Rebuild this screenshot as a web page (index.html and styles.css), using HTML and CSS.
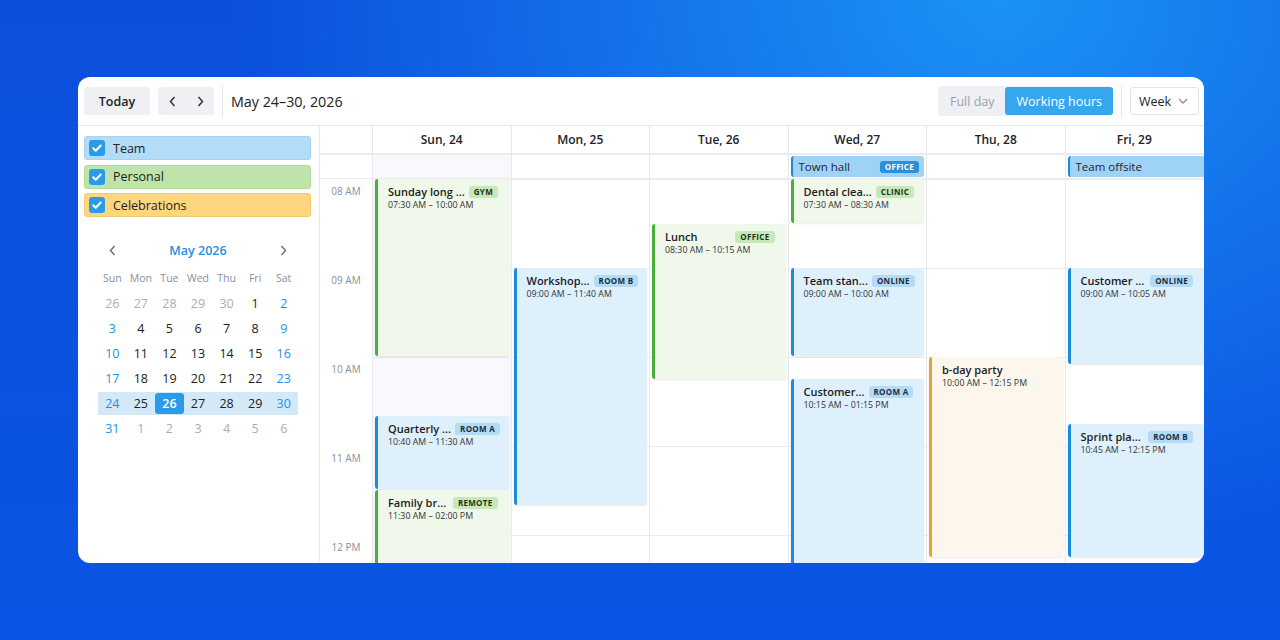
FILE: index.html
```html
<!DOCTYPE html>
<html lang="en">
<head>
  <meta charset="UTF-8">
  <meta name="viewport" content="width=device-width,initial-scale=1.0">
  <title>Week schedule</title>
  <link rel="stylesheet" href="styles.css">
</head>
<body>

<div class="card">
  <div class="toolbar">
    <button class="btn btn-today">Today</button>
    <div class="btn nav">
      <button class="nav-btn"><svg width="7" height="11" viewBox="0 0 7 11"><path d="M5.5 1 1.5 5.5 5.5 10" fill="none" stroke="#333" stroke-width="1.5"/></svg></button>
      <button class="nav-btn"><svg width="7" height="11" viewBox="0 0 7 11"><path d="M1.5 1 5.5 5.5 1.5 10" fill="none" stroke="#333" stroke-width="1.5"/></svg></button>
    </div>
    <div class="divider"></div>
    <div class="range">May 24–30, 2026</div>
    <div class="spacer"></div>
    <div class="switch">
      <button class="switch-item">Full day</button>
      <button class="switch-item active">Working hours</button>
    </div>
    <div class="divider"></div>
    <button class="select">Week <svg width="10" height="6" viewBox="0 0 10 6"><path d="M1 1l4 4 4-4" fill="none" stroke="#8a8f98" stroke-width="1.3"/></svg></button>
  </div>

  <div class="content">
    <aside class="sidebar">
      <ul class="cal-list">
        <li class="cal-item team"><span class="check"><svg width="16" height="16" viewBox="0 0 16 16"><path d="M4.2 8.2l2.5 2.5 5-5.2" fill="none" stroke="#fff" stroke-width="2" stroke-linecap="round" stroke-linejoin="round"/></svg></span>Team</li>
        <li class="cal-item personal"><span class="check"><svg width="16" height="16" viewBox="0 0 16 16"><path d="M4.2 8.2l2.5 2.5 5-5.2" fill="none" stroke="#fff" stroke-width="2" stroke-linecap="round" stroke-linejoin="round"/></svg></span>Personal</li>
        <li class="cal-item celebrations"><span class="check"><svg width="16" height="16" viewBox="0 0 16 16"><path d="M4.2 8.2l2.5 2.5 5-5.2" fill="none" stroke="#fff" stroke-width="2" stroke-linecap="round" stroke-linejoin="round"/></svg></span>Celebrations</li>
      </ul>

      <div class="mini">
        <div class="mini-head">
          <span class="mini-nav"><svg width="7" height="11" viewBox="0 0 7 11"><path d="M5.5 1 1.5 5.5 5.5 10" fill="none" stroke="#666" stroke-width="1.3"/></svg></span>
          <span class="mini-title">May 2026</span>
          <span class="mini-nav"><svg width="7" height="11" viewBox="0 0 7 11"><path d="M1.5 1 5.5 5.5 1.5 10" fill="none" stroke="#666" stroke-width="1.3"/></svg></span>
        </div>
        <div class="mini-row wd"><span>Sun</span><span>Mon</span><span>Tue</span><span>Wed</span><span>Thu</span><span>Fri</span><span>Sat</span></div>
        <div class="mini-row"><span class="out">26</span><span class="out">27</span><span class="out">28</span><span class="out">29</span><span class="out">30</span><span>1</span><span class="we">2</span></div>
        <div class="mini-row"><span class="we">3</span><span>4</span><span>5</span><span>6</span><span>7</span><span>8</span><span class="we">9</span></div>
        <div class="mini-row"><span class="we">10</span><span>11</span><span>12</span><span>13</span><span>14</span><span>15</span><span class="we">16</span></div>
        <div class="mini-row"><span class="we">17</span><span>18</span><span>19</span><span>20</span><span>21</span><span>22</span><span class="we">23</span></div>
        <div class="mini-row sel"><span class="we">24</span><span>25</span><span class="today">26</span><span>27</span><span>28</span><span>29</span><span class="we">30</span></div>
        <div class="mini-row"><span class="we">31</span><span class="out">1</span><span class="out">2</span><span class="out">3</span><span class="out">4</span><span class="out">5</span><span class="out">6</span></div>
      </div>
    </aside>

    <div class="schedule">
      <div class="row head">
        <div class="cell"></div>
        <div class="cell">Sun, 24</div>
        <div class="cell">Mon, 25</div>
        <div class="cell">Tue, 26</div>
        <div class="cell">Wed, 27</div>
        <div class="cell">Thu, 28</div>
        <div class="cell last">Fri, 29</div>
        <div class="cell"></div>
      </div>

      <div class="row allday">
        <div class="cell"></div>
        <div class="cell weekend"></div>
        <div class="cell"></div>
        <div class="cell"></div>
        <div class="cell"><div class="allday-ev"><span>Town hall</span><span class="badge solid">Office</span></div></div>
        <div class="cell"></div>
        <div class="cell"><div class="allday-ev wide"><span>Team offsite</span></div></div>
        <div class="cell weekend"></div>
      </div>

      <div class="row times">
        <div class="gutter">
          <div class="hour">08 AM</div>
          <div class="hour">09 AM</div>
          <div class="hour">10 AM</div>
          <div class="hour">11 AM</div>
          <div class="hour">12 PM</div>
        </div>

        <div class="col weekend">
          <div class="event green" style="top:0;height:177px">
            <div class="ev-head"><span class="ev-title">Sunday long ...</span><span class="badge">Gym</span></div>
            <div class="ev-time">07:30 AM – 10:00 AM</div>
          </div>
          <div class="event blue" style="top:237px;height:73px">
            <div class="ev-head"><span class="ev-title">Quarterly ...</span><span class="badge">Room A</span></div>
            <div class="ev-time">10:40 AM – 11:30 AM</div>
          </div>
          <div class="event green" style="top:311px;height:222px">
            <div class="ev-head"><span class="ev-title">Family br...</span><span class="badge">Remote</span></div>
            <div class="ev-time">11:30 AM – 02:00 PM</div>
          </div>
        </div>

        <div class="col">
          <div class="event blue" style="top:89px;height:237px">
            <div class="ev-head"><span class="ev-title">Workshop...</span><span class="badge">Room B</span></div>
            <div class="ev-time">09:00 AM – 11:40 AM</div>
          </div>
        </div>

        <div class="col">
          <div class="event green" style="top:45px;height:155px">
            <div class="ev-head"><span class="ev-title">Lunch</span><span class="badge">Office</span></div>
            <div class="ev-time">08:30 AM – 10:15 AM</div>
          </div>
        </div>

        <div class="col">
          <div class="event green" style="top:0;height:44px">
            <div class="ev-head"><span class="ev-title">Dental clea...</span><span class="badge">Clinic</span></div>
            <div class="ev-time">07:30 AM – 08:30 AM</div>
          </div>
          <div class="event blue" style="top:89px;height:88px">
            <div class="ev-head"><span class="ev-title">Team stan...</span><span class="badge">Online</span></div>
            <div class="ev-time">09:00 AM – 10:00 AM</div>
          </div>
          <div class="event blue" style="top:200px;height:267px">
            <div class="ev-head"><span class="ev-title">Customer...</span><span class="badge">Room A</span></div>
            <div class="ev-time">10:15 AM – 01:15 PM</div>
          </div>
        </div>

        <div class="col">
          <div class="event orange" style="top:178px;height:200px">
            <div class="ev-head"><span class="ev-title">b-day party</span></div>
            <div class="ev-time">10:00 AM – 12:15 PM</div>
          </div>
        </div>

        <div class="col">
          <div class="event blue" style="top:89px;height:96px">
            <div class="ev-head"><span class="ev-title">Customer ...</span><span class="badge">Online</span></div>
            <div class="ev-time">09:00 AM – 10:05 AM</div>
          </div>
          <div class="event blue" style="top:245px;height:133px">
            <div class="ev-head"><span class="ev-title">Sprint pla...</span><span class="badge">Room B</span></div>
            <div class="ev-time">10:45 AM – 12:15 PM</div>
          </div>
        </div>

        <div class="col weekend"></div>
      </div>
    </div>
  </div>
</div>

</body>
</html>
```

FILE: styles.css
```css
* {
  box-sizing: border-box;
}
body {
  margin: 0;
  width: 1280px;
  height: 640px;
  padding: 77px 0 0 78px;
  overflow: hidden;
  font-family: "Open Sans", "Noto Sans", sans-serif;
  color: #222;
  background:
    radial-gradient(ellipse 75% 110% at 78% 0%, rgba(28,150,248,0.95) 0%, rgba(28,150,248,0) 80%),
    linear-gradient(180deg, #0c4fdb 0%, #0a55e3 100%);
}
button {
  font-family: inherit;
  border: none;
  background: none;
  padding: 0;
  cursor: pointer;
  color: inherit;
}
.card {
  width: 1126px;
  height: 486px;
  background: #fff;
  border-radius: 12px;
  overflow: hidden;
  display: flex;
  flex-direction: column;
}

/* toolbar */
.toolbar {
  flex: none;
  height: 49px;
  display: flex;
  align-items: center;
  padding: 0 5px 0 6px;
  border-bottom: 1px solid #e6e7ea;
}
.btn {
  height: 28px;
  background: #eef0f3;
  border-radius: 3px;
}
.btn-today {
  width: 66px;
  font-size: 12.5px;
  font-weight: 600;
  color: #222;
}
.nav {
  display: flex;
  width: 56px;
  margin-left: 8px;
}
.nav-btn {
  width: 28px;
  height: 28px;
  display: flex;
  align-items: center;
  justify-content: center;
}
.divider {
  width: 1px;
  height: 32px;
  background: #e3e5e8;
  margin: 0 8px;
}
.range {
  font-size: 14.3px;
  color: #222;
}
.spacer {
  flex: 1;
}
.switch {
  display: flex;
  background: #eef0f4;
  border-radius: 4px;
  padding: 1px 0;
}
.switch-item {
  height: 28px;
  font-size: 12.5px;
  color: #9ca1a9;
  padding: 0 11px 0 12px;
  border-radius: 3px;
}
.switch-item.active {
  background: #36a6ef;
  color: #fff;
  padding: 0 11px;
}
.select {
  width: 69px;
  height: 28px;
  border: 1px solid #e1e3e7;
  border-radius: 3px;
  display: flex;
  align-items: center;
  justify-content: space-between;
  padding: 0 10px 0 8px;
  font-size: 12.5px;
  color: #222;
}

/* sidebar */
.content {
  flex: 1;
  display: flex;
  min-height: 0;
}
.sidebar {
  flex: none;
  width: 242px;
  border-right: 1px solid #e6e7ea;
  padding: 10px 8px 0 6px;
}
.cal-list {
  list-style: none;
  margin: 0;
  padding: 0;
  display: flex;
  flex-direction: column;
  gap: 4.5px;
}
.cal-item {
  height: 24px;
  display: flex;
  align-items: center;
  gap: 8px;
  padding-left: 4px;
  border-radius: 3px;
  border: 1px solid;
  font-size: 12.5px;
  color: #222;
}
.cal-item.team {
  background: #b3dcf7;
  border-color: #a5d3f3;
}
.cal-item.personal {
  background: #bfe4ab;
  border-color: #afdb99;
}
.cal-item.celebrations {
  background: #fdd680;
  border-color: #f6cb6c;
}
.check {
  width: 16px;
  height: 16px;
  border-radius: 3px;
  background: #2b9be8;
  display: flex;
}
.mini {
  width: 200px;
  margin: 21px 0 0 14px;
}
.mini-head {
  height: 24px;
  display: flex;
  align-items: center;
  justify-content: space-between;
  margin-bottom: 4px;
}
.mini-nav {
  width: 28.5px;
  display: flex;
  justify-content: center;
}
.mini-title {
  font-size: 12.5px;
  font-weight: 600;
  color: #1e90e6;
}
.mini-row {
  display: grid;
  grid-template-columns: repeat(7, 1fr);
  height: 25px;
  align-items: center;
  text-align: center;
  font-size: 12.5px;
  color: #222;
}
.mini-row span {
  line-height: 21px;
}
.mini-row.wd {
  font-size: 10.5px;
  color: #8a8f99;
}
.mini-row.sel {
  background: #d3e9f8;
  height: 23px;
  margin: 1px 0;
}
.mini-row .out {
  color: #a9adb6;
}
.mini-row .we {
  color: #1a93e6;
}
.mini-row .today {
  background: #2b9be8;
  color: #fff;
  font-weight: 600;
  border-radius: 3px;
}

/* schedule */
.schedule {
  flex: 1;
  min-width: 0;
  overflow: hidden;
  display: flex;
  flex-direction: column;
}
.row {
  display: grid;
  grid-template-columns: 53px repeat(5, 138.5px) 141.5px 138.5px;
}
.cell {
  border-right: 1px solid #e8e8ec;
}
.head {
  height: 29px;
  border-bottom: 2px solid #ececf0;
}
.head .cell {
  display: flex;
  align-items: center;
  justify-content: center;
  font-size: 12px;
  font-weight: 600;
  color: #222;
}
.head .cell.last {
  padding-right: 3px;
}
.allday {
  height: 24px;
  border-bottom: 1px solid #ececf0;
}
.weekend {
  background-color: #f9f8fd;
}
.allday-ev {
  margin: 1px 2px 0 2px;
  height: 21px;
  background: #9fd3f6;
  border-left: 2px solid #1a88df;
  border-radius: 3px;
  display: flex;
  align-items: center;
  justify-content: space-between;
  padding: 0 5px 0 6px;
  font-size: 11.5px;
  color: #1d2430;
}
.allday-ev.wide {
  margin-right: -10px;
}
.times {
  flex: 1;
  min-height: 0;
}
.gutter {
  border-right: 1px solid #e8e8ec;
}
.hour {
  height: 89px;
  padding-top: 5px;
  text-align: center;
  font-size: 10px;
  color: #8a8f98;
}
.col {
  position: relative;
  border-right: 1px solid #e8e8ec;
  background-image: linear-gradient(to bottom, #ebebef 1px, transparent 1px);
  background-size: 100% 89px;
}
.event {
  position: absolute;
  left: 2px;
  right: 2px;
  border-left: 3px solid;
  border-radius: 3px;
  padding: 5px 11px 0 10px;
  box-shadow: 0 1px 2px rgba(0,0,0,0.09);
  overflow: hidden;
}
.event.blue {
  background: #dff0fd;
  border-color: #1b8be0;
}
.event.green {
  background: #eff8ea;
  border-color: #4cae3a;
}
.event.orange {
  background: #fdf6ec;
  border-color: #e6a332;
}
.ev-head {
  display: flex;
  align-items: center;
  justify-content: space-between;
  gap: 4px;
  height: 15px;
}
.ev-title {
  font-size: 11px;
  font-weight: 600;
  color: #1c1c1c;
  white-space: nowrap;
}
.ev-time {
  font-size: 8.8px;
  line-height: 13px;
  color: #333;
}
.badge {
  flex: none;
  font-size: 8px;
  font-weight: 700;
  letter-spacing: 0.3px;
  text-transform: uppercase;
  line-height: 12px;
  padding: 0 5px;
  border-radius: 3px;
  color: #1d2b3a;
}
.blue .badge {
  background: #b3dbf6;
}
.green .badge {
  background: #c7e9b9;
  color: #1f3518;
}
.badge.solid {
  background: #2b8fde;
  color: #fff;
}
```
